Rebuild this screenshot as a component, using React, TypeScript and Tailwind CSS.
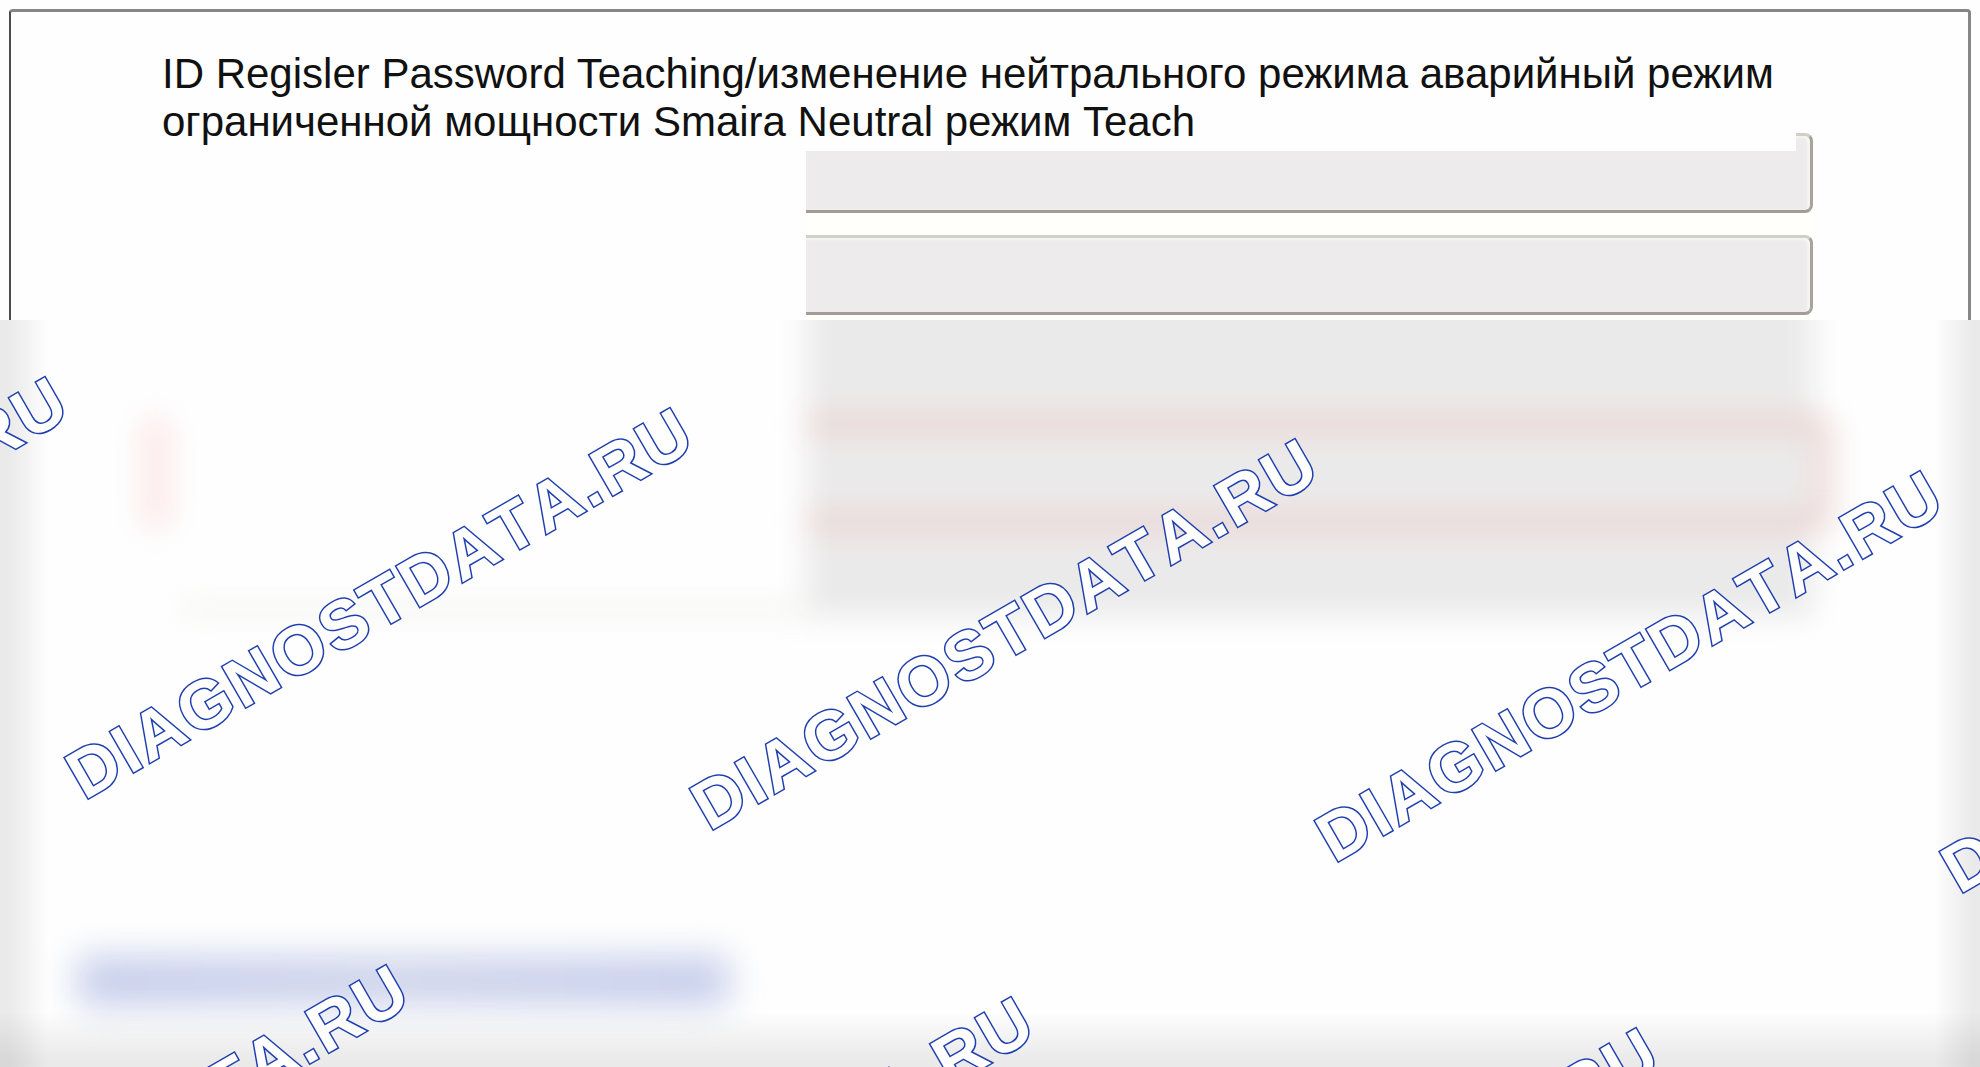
// where each tilted stamp starts, in px from the preview's top-left
const STAMPS = [
  { left: -535, top: 389 },
  { left: 90, top: 420 },
  { left: 715, top: 451 },
  { left: 1340, top: 483 },
  { left: 1965, top: 514 },
  { left: -194, top: 977 },
  { left: 431, top: 1009 },
  { left: 1056, top: 1040 },
];

function Stamp({ left, top }: { left: number; top: number }) {
  return (
    <span
      className="absolute h-[70px] origin-bottom-left -rotate-30 whitespace-nowrap text-[68px] leading-[70px] font-bold tracking-[3px] text-white [font-kerning:none] [-webkit-text-stroke:3px_#1f3fae] [paint-order:stroke_fill] [stroke-linejoin:round]"
      style={{ left, top }}
    >
      DIAGNOSTDATA.RU
    </span>
  );
}

function Field() {
  return (
    <div className="h-20 rounded-r-lg border-t-3 border-r-3 border-b-3 border-t-[#d0d0c8] border-r-[#a8a39a] border-b-[#a39c94] bg-[#edebeb] shadow-[inset_-3px_2px_2px_#f6f5f1]" />
  );
}

function SharpPart() {
  return (
    <header className="bg-[#fefefe] px-[9px] pt-[9px]">
      <div className="rounded-t border-t-3 border-r-3 border-l-2 border-t-[#868686] border-r-[#868686] border-l-[#4c4c4c] pt-[38px]">
        <h1 className="relative z-10 mr-[172px] ml-[151px] bg-[#fefefe] pb-[5px] text-[42px] leading-[48px] text-[#111]">
          ID Regisler Password Teaching/изменение нейтрального режима аварийный режим
          ограниченной мощности Smaira Neutral режим Teach
        </h1>
        <div className="-mt-[18px] grid grid-cols-[795fr_1007fr_155fr]">
          <div />
          <div className="flex flex-col gap-[22px] bg-[#fffffb] pb-[5px]">
            <Field />
            <Field />
          </div>
        </div>
      </div>
    </header>
  );
}

function BlurredPart() {
  return (
    <main className="relative flex flex-1 flex-col overflow-hidden bg-[#fefefe]">
      {/* starts above the edge so the blur does not fade out at the top */}
      <div className="-mt-10 grid h-[337px] grid-cols-[806fr_1007fr_167fr] blur-[14px]">
        <div className="flex flex-col">
          <div className="mt-[136px] ml-[140px] h-[114px] w-8 rounded-full bg-[#fdeaea]" />
          <div className="mt-auto ml-[180px] h-4 bg-[#f6f6f4]" />
        </div>
        <div className="bg-[#ebeaea] pt-[132px]">
          <div className="-mr-[22px] h-[122px] rounded-r-3xl border-y-24 border-r-24 border-y-[#ead9d7] border-r-[#f0dfdd]" />
        </div>
      </div>

      <div className="mt-auto mb-[62px] ml-[78px] h-12 w-[650px] bg-linear-to-r from-[#c3cbea] via-[#ccd2ea] to-[#c3cbea] blur-[18px]" />

      {/* grey edges */}
      <div className="absolute inset-0 bg-[linear-gradient(to_right,rgba(0,0,0,.08)_8px,rgba(0,0,0,.05)_24px,transparent_48px),linear-gradient(to_left,rgba(0,0,0,.08)_8px,rgba(0,0,0,.05)_22px,transparent_46px),linear-gradient(to_top,rgba(0,0,0,.08)_8px,rgba(0,0,0,.05)_26px,transparent_56px)]" />

      {STAMPS.map((s) => (
        <Stamp key={s.left} left={s.left} top={s.top} />
      ))}
    </main>
  );
}

export default function App() {
  return (
    <div className="flex min-h-screen flex-col overflow-hidden bg-white font-['Liberation_Sans',sans-serif]">
      <SharpPart />
      <BlurredPart />
    </div>
  );
}
